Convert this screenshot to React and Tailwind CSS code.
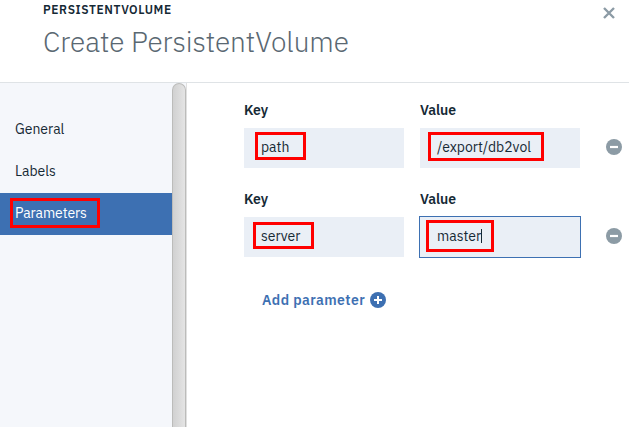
import React from "react";

const sans = "font-['IBM_Plex_Sans',Roboto,'Liberation_Sans',sans-serif]";

function MinusIcon() {
  return (
    <svg className="block size-4" viewBox="0 0 16 16" aria-hidden="true">
      <circle cx="8" cy="8" r="8" fill="#8c9ba5" />
      <path d="M4 8h8" stroke="#fff" strokeWidth="2.2" />
    </svg>
  );
}

function PlusIcon() {
  return (
    <svg className="block size-4" viewBox="0 0 16 16" aria-hidden="true">
      <circle cx="8" cy="8" r="8" fill="#3d70b2" />
      <path d="M4 8h8M8 4v8" stroke="#fff" strokeWidth="2" />
    </svg>
  );
}

function Mark({ className }) {
  return <span className={`pointer-events-none absolute border-3 border-[#ff0000] ${className}`} />;
}

function Field({ label, value, focused, mark }) {
  return (
    <div className="w-40">
      <div className="h-[26px] text-sm leading-4 font-semibold tracking-[-0.1px] text-[#152935]">{label}</div>
      <div
        className={`relative flex h-10 items-center bg-[#eaeff6] pb-0.5 pl-[17px] text-sm text-[#152935] ${
          focused ? "outline outline-[#3d70b2]" : ""
        }`}
      >
        <span>{value}</span>
        {focused && <span className="h-[14px] w-px bg-[#152935]" />}
        <Mark className={mark} />
      </div>
    </div>
  );
}

export default function App() {
  return (
    <div className={`flex h-[427px] w-[629px] flex-col overflow-hidden bg-white ${sans}`}>
      <header className="flex h-[83px] shrink-0 justify-between border-b border-[#dfe3e6] pl-[43px]">
        <div>
          <div className="pt-0.5 text-xs leading-4 font-semibold tracking-[0.6px] text-[#152935]">PERSISTENTVOLUME</div>
          <h1 className="mt-1.5 text-[28px] leading-9 font-light tracking-[-0.05px] whitespace-nowrap text-[#5a6872]">
            Create PersistentVolume
          </h1>
        </div>
        <svg className="mt-[7px] mr-3.5 size-3" viewBox="0 0 12 12" aria-label="Close">
          <path d="M1 1l10 10M11 1L1 11" stroke="#8c9ba5" strokeWidth="2.4" />
        </svg>
      </header>
      <div className="flex min-h-0 flex-1">
        <nav className="w-[172px] bg-[#f5f7fb] pt-[26px] text-sm text-[#152935]">
          <div className="flex h-[42px] items-center pb-0.5 pl-[15px]">General</div>
          <div className="flex h-[42px] items-center pb-0.5 pl-[15px]">Labels</div>
          <div className="relative flex h-[42px] items-center bg-[#3d70b2] pb-0.5 pl-[15px] tracking-[-0.1px] text-white">
            Parameters
            <Mark className="top-[5px] left-[10px] h-[30px] w-[90px]" />
          </div>
        </nav>
        <div className="w-[15px] border-r border-[#e0e0e0] bg-[#f5f7fb]">
          <div className="h-full rounded-t-[7px] border-x border-t border-[#bcbcba] bg-linear-to-r from-[#d1d1d1] to-[#e4e4e4]" />
        </div>
        <main className="flex-1 pt-[19px] pl-[57px]">
          <div className="flex gap-4">
            <Field label="Key" value="path" mark="top-1 left-[11px] h-7 w-[51px]" />
            <Field label="Value" value="/export/db2vol" mark="top-1 left-2 h-[29px] w-[116px]" />
            <div className="mt-[37px] ml-2.5"><MinusIcon /></div>
          </div>
          <div className="mt-[23px] flex gap-4">
            <Field label="Key" value="server" mark="top-[5px] left-[9px] h-[27px] w-[61px]" />
            <Field label="Value" value="master" focused mark="top-[3px] left-1.5 h-8 w-[68px]" />
            <div className="mt-[37px] ml-2.5"><MinusIcon /></div>
          </div>
          <div className="mt-[35px] ml-[18px] flex items-center text-sm leading-4 font-semibold text-[#3d70b2]">
            <span className="w-[108px] tracking-[0.42px] whitespace-nowrap">Add parameter</span>
            <PlusIcon />
          </div>
        </main>
      </div>
    </div>
  );
}
